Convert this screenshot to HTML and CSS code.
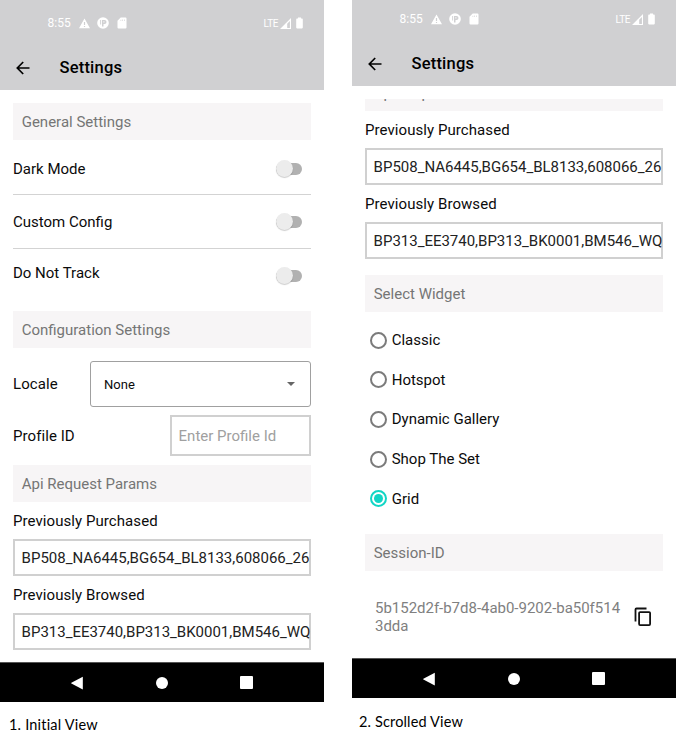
FILE: index.html
```html
<!DOCTYPE html>
<html lang="en">
<head>
<meta charset="utf-8">
<title>Settings</title>
<link rel="stylesheet" href="styles.css">
</head>
<body>
<svg class="defs" width="0" height="0" aria-hidden="true">
  <symbol id="warn" viewBox="0 0 11 11"><path fill="#fff" fill-rule="evenodd" d="M5.5 .5 11 10.3H0ZM4.9 4v3h1.2V4ZM4.9 7.9v1.2h1.2V7.9Z"/></symbol>
  <symbol id="app" viewBox="0 0 12 12"><circle cx="6" cy="6" r="5.8" fill="#fff"/><path fill="#d0d0d2" d="M3.200 3h.9v4.500h-.9ZM5 3h2.500a2 2 0 0 1 0 4H6.500v2.500H5Z"/><path fill="#fff" d="M6.400 4.300h1v1.300h-1Z"/></symbol>
  <symbol id="card" viewBox="0 0 10 12"><path fill="#fff" fill-rule="evenodd" d="M3.7.5H8.5q1 0 1 1v9q0 1-1 1h-7q-1 0-1-1V3.8ZM3.6 2.800v1.200h.6V2.800ZM5.300 2.400v1.600h.6v-1.600ZM7 2.400v1.600h.6v-1.600Z"/></symbol>
  <symbol id="signal" viewBox="0 0 11 11"><path fill="#fff" fill-rule="evenodd" d="M11 0v11H0ZM9.9 3 7.2 5.7V10h2.7Z"/></symbol>
  <symbol id="battery" viewBox="0 0 7 12"><path fill="#fff" d="M2 .4h3v1.2h1q.8 0 .8.8v8.2q0 .8-.8.8H1q-.8 0-.8-.8V2.400q0-.8.8-.8h1Z"/></symbol>
  <symbol id="back" viewBox="0 0 14 14"><path fill="none" stroke="#000" stroke-width="1.7" d="M13.500 7H1.700M7.200 1 1.300 7l5.900 6"/></symbol>
  <symbol id="copy" viewBox="0 0 18 20"><path fill="none" stroke="#111" stroke-width="1.800" d="M1.500 14.500V2.500q0-1 1-1H12.500"/><rect x="5.100" y="5.100" width="11" height="13" rx="1" fill="none" stroke="#111" stroke-width="1.800"/></symbol>
  <symbol id="nav-back" viewBox="0 0 12 14"><path fill="#fff" d="M11.800.8v12.600L.4 7.500q-.6-.4 0-.8Z"/></symbol>
</svg>

<main class="views">
  <figure class="view">
    <div class="phone">
      <header class="appbar">
        <div class="status">
          <span class="time">8:55</span>
          <svg class="i-warn"><use href="#warn"/></svg>
          <svg class="i-app"><use href="#app"/></svg>
          <svg class="i-card"><use href="#card"/></svg>
          <span class="lte">LTE</span>
          <svg class="i-signal"><use href="#signal"/></svg>
          <svg class="i-battery"><use href="#battery"/></svg>
        </div>
        <div class="toolbar"><svg class="i-back"><use href="#back"/></svg><h1>Settings</h1></div>
      </header>
      <div class="content">
        <h2 class="section">General Settings</h2>
        <div class="toggle"><span>Dark Mode</span><i class="switch"></i></div>
        <div class="toggle"><span>Custom Config</span><i class="switch"></i></div>
        <div class="toggle last"><span>Do Not Track</span><i class="switch"></i></div>
        <h2 class="section">Configuration Settings</h2>
        <div class="field locale"><span>Locale</span><div class="select"><span>None</span><i class="caret"></i></div></div>
        <div class="field profile"><span>Profile ID</span><div class="box hint">Enter Profile Id</div></div>
        <h2 class="section">Api Request Params</h2>
        <div class="label">Previously Purchased</div>
        <div class="box"><span class="purchased">BP508_NA6445,BG654_BL8133,608066_26</span></div>
        <div class="label">Previously Browsed</div>
        <div class="box"><span class="browsed">BP313_EE3740,BP313_BK0001,BM546_WQ</span></div>
      </div>
      <nav class="navbar"><svg class="n-back"><use href="#nav-back"/></svg><i class="n-home"></i><i class="n-recent"></i></nav>
    </div>
    <figcaption>1. Initial View</figcaption>
  </figure>

  <figure class="view scrolled">
    <div class="phone">
      <header class="appbar">
        <div class="status">
          <span class="time">8:55</span>
          <svg class="i-warn"><use href="#warn"/></svg>
          <svg class="i-app"><use href="#app"/></svg>
          <svg class="i-card"><use href="#card"/></svg>
          <span class="lte">LTE</span>
          <svg class="i-signal"><use href="#signal"/></svg>
          <svg class="i-battery"><use href="#battery"/></svg>
        </div>
        <div class="toolbar"><svg class="i-back"><use href="#back"/></svg><h1>Settings</h1></div>
      </header>
      <div class="content">
        <h2 class="section">Api Request Params</h2>
        <div class="label">Previously Purchased</div>
        <div class="box"><span class="purchased">BP508_NA6445,BG654_BL8133,608066_26</span></div>
        <div class="label">Previously Browsed</div>
        <div class="box"><span class="browsed">BP313_EE3740,BP313_BK0001,BM546_WQ</span></div>
        <h2 class="section widget">Select Widget</h2>
        <ul class="radios">
          <li><i class="radio"></i>Classic</li>
          <li><i class="radio"></i>Hotspot</li>
          <li><i class="radio"></i>Dynamic Gallery</li>
          <li><i class="radio"></i>Shop The Set</li>
          <li><i class="radio on"></i>Grid</li>
        </ul>
        <h2 class="section">Session-ID</h2>
        <div class="session"><p>5b152d2f-b7d8-4ab0-9202-ba50f514<br>3dda</p><svg class="i-copy"><use href="#copy"/></svg></div>
      </div>
      <nav class="navbar"><svg class="n-back"><use href="#nav-back"/></svg><i class="n-home"></i><i class="n-recent"></i></nav>
    </div>
    <figcaption>2. Scrolled View</figcaption>
  </figure>
</main>
</body>
</html>
```
FILE: styles.css
```css
* { box-sizing: border-box; }
body { margin: 0; background: #fff; color: #0b0b0b; font-family: Roboto, sans-serif; font-size: 15px; letter-spacing: 0.07px; }
.defs { display: block; }
h1, h2, p, ul, figure { margin: 0; padding: 0; }
svg, i { display: block; flex: none; }

.views { display: flex; gap: 28px; height: 748px; overflow: hidden; }
.view { width: 324px; }
.scrolled { margin-top: -4px; }
.phone { display: flex; flex-direction: column; height: 702px; }

.appbar { height: 90px; flex: none; background: #d0d0d2; color: #fff; }
.status { display: flex; align-items: center; height: 46px; padding: 0 21px 0 47.5px; }
.time { width: 31.5px; font-size: 12px; letter-spacing: 0; }
.i-warn { width: 11px; height: 11px; }
.i-app { width: 12px; height: 12px; margin-left: 7px; }
.i-card { width: 10px; height: 12px; margin-left: 8px; }
.lte { margin-left: auto; font-size: 10px; letter-spacing: -0.4px; }
.i-signal { width: 11px; height: 11px; margin-left: 2px; }
.i-battery { width: 7px; height: 12px; margin-left: 5px; }
.toolbar { display: flex; align-items: center; height: 44px; padding: 0 16px 1px; color: #000; }
.i-back { width: 14px; height: 14px; }
h1 { margin-left: 29.5px; font-size: 16.5px; font-weight: 500; letter-spacing: 0.2px; }

.content { flex: 1; min-height: 0; margin-top: 13px; padding: 0 13px; overflow: hidden; }
.section { height: 37px; padding: 1px 8.700px 0; background: #f7f5f6; color: #757575; font-size: 15px; font-weight: 400; line-height: 37px; letter-spacing: 0; }

.toggle { display: flex; align-items: center; justify-content: space-between; height: 54px; padding: 1px 9.500px 0 0; border-bottom: 1px solid #d3d3d3; letter-spacing: 0; }
.toggle:nth-of-type(1) { height: 55px; padding-top: 3px; }
.toggle.last { height: 62px; padding: 0 9.500px 15px 0; border: 0; }
.toggle.last .switch { margin-top: 6px; }
.switch { width: 26px; height: 12px; border-radius: 6px; background: #b1b1b1; }
.switch::before { content: ""; display: block; width: 17px; height: 17px; margin: -3px 0 0; border-radius: 50%; background: #ececec; box-shadow: 0 1px 1px #0003; }

.field { display: flex; align-items: center; justify-content: space-between; }
.locale { height: 46px; margin-top: 13px; }
.select { display: flex; align-items: center; justify-content: space-between; width: 221px; height: 46px; padding: 0 15px 0 13px; border: 1px solid #a0a0a0; border-radius: 3px; font-size: 13px; }
.caret { border: 4px solid transparent; border-top-color: #666; border-bottom: 0; }
.profile { height: 41px; margin: 8px 0 9px; }
.profile .box { width: 141px; height: 41px; line-height: 38px; }
.box { height: 37px; padding-left: 6.600px; border: 2px solid #d0d0d0; background: #fff; color: #222; line-height: 34px; letter-spacing: -0.01px; white-space: nowrap; }
.box.hint { color: #a0a0a0; letter-spacing: 0; }
.label { height: 37px; line-height: 38px; }

.scrolled .section:first-child { margin-top: -25px; }
.scrolled .label, .scrolled .box { position: relative; top: -0.5px; }
.scrolled .widget { margin-top: 16px; }
.radios { list-style: none; height: 222px; padding-top: 8.500px; }
.radios li { display: flex; align-items: center; height: 39.6px; padding-left: 5px; letter-spacing: 0; }
.radio { display: grid; place-items: center; width: 17px; height: 17px; margin-right: 4.700px; border: 2px solid #7b7b7b; border-radius: 50%; }
.radio.on { border-color: #12d5c5; }
.radio.on::before { content: ""; width: 9px; height: 9px; border-radius: 50%; background: #12d5c5; }
.session { display: flex; justify-content: space-between; padding: 29px 11px 0 10px; color: #808080; line-height: 17.500px; letter-spacing: -0.02px; }
.i-copy { width: 18px; height: 20px; margin-top: 7px; }

.navbar { display: flex; align-items: center; flex: none; height: 40px; padding-left: 71px; background: #000; border-top: 1px solid #555; }
.n-back { width: 12px; height: 14px; }
.n-home { width: 12px; height: 12px; margin-left: 73px; border-radius: 50%; background: #fff; }
.n-recent { width: 13px; height: 13px; margin-left: 72px; border-radius: 1px; background: #fff; }
figcaption { padding: 14px 9px 0; color: #000; font: 14.500px/18px Lato, sans-serif; letter-spacing: 0.2px; font-variant-ligatures: none; }
.scrolled figcaption { padding: 15px 7px 0; letter-spacing: 0.15px; }
```
